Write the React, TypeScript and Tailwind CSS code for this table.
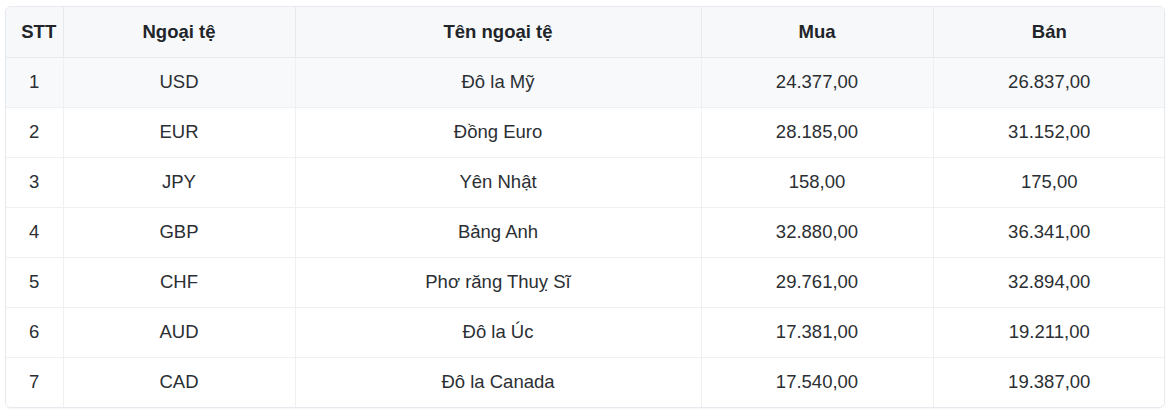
import React from "react";

const rows = [
  ["1", "USD", "Đô la Mỹ", "24.377,00", "26.837,00"],
  ["2", "EUR", "Đồng Euro", "28.185,00", "31.152,00"],
  ["3", "JPY", "Yên Nhật", "158,00", "175,00"],
  ["4", "GBP", "Bảng Anh", "32.880,00", "36.341,00"],
  ["5", "CHF", "Phơ răng Thuỵ Sĩ", "29.761,00", "32.894,00"],
  ["6", "AUD", "Đô la Úc", "17.381,00", "19.211,00"],
  ["7", "CAD", "Đô la Canada", "17.540,00", "19.387,00"],
];

export default function App() {
  return (
    <div className="w-[1170px] h-[413px] bg-white pt-[6px] px-[5px]" style={{ fontFamily: '"Liberation Sans", Arial, sans-serif' }}>
      <div className="w-[1160px] rounded-[6px] border border-[#e6e9ed] overflow-hidden shadow-[0_1px_2px_rgba(0,0,0,0.04)]">
        <table className="w-full border-collapse table-fixed text-[18.5px] text-[#2b2f33]">
          <colgroup>
            <col className="w-[57px]" />
            <col className="w-[232px]" />
            <col className="w-[406px]" />
            <col className="w-[232px]" />
            <col className="w-[232px]" />
          </colgroup>
          <thead>
            <tr className="h-[50px] bg-[#f6f8fa]">
              {["STT", "Ngoại tệ", "Tên ngoại tệ", "Mua", "Bán"].map((h, i) => (
                <th key={h} className={`font-bold text-center text-[#212529] border-b border-[#e6e9ed] ${i > 0 ? "border-l" : "pl-[9px]"}`}>
                  {h}
                </th>
              ))}
            </tr>
          </thead>
          <tbody>
            {rows.map((r, ri) => (
              <tr key={r[0]} className={`h-[50px] ${ri === 0 ? "bg-[#f8f9fb]" : "bg-white"}`}>
                {r.map((c, ci) => (
                  <td key={ci} className={`text-center font-normal ${ri < rows.length - 1 ? "border-b" : ""} border-[#eef0f2] ${ci > 0 ? "border-l" : ""}`}>
                    {c}
                  </td>
                ))}
              </tr>
            ))}
          </tbody>
        </table>
      </div>
    </div>
  );
}
